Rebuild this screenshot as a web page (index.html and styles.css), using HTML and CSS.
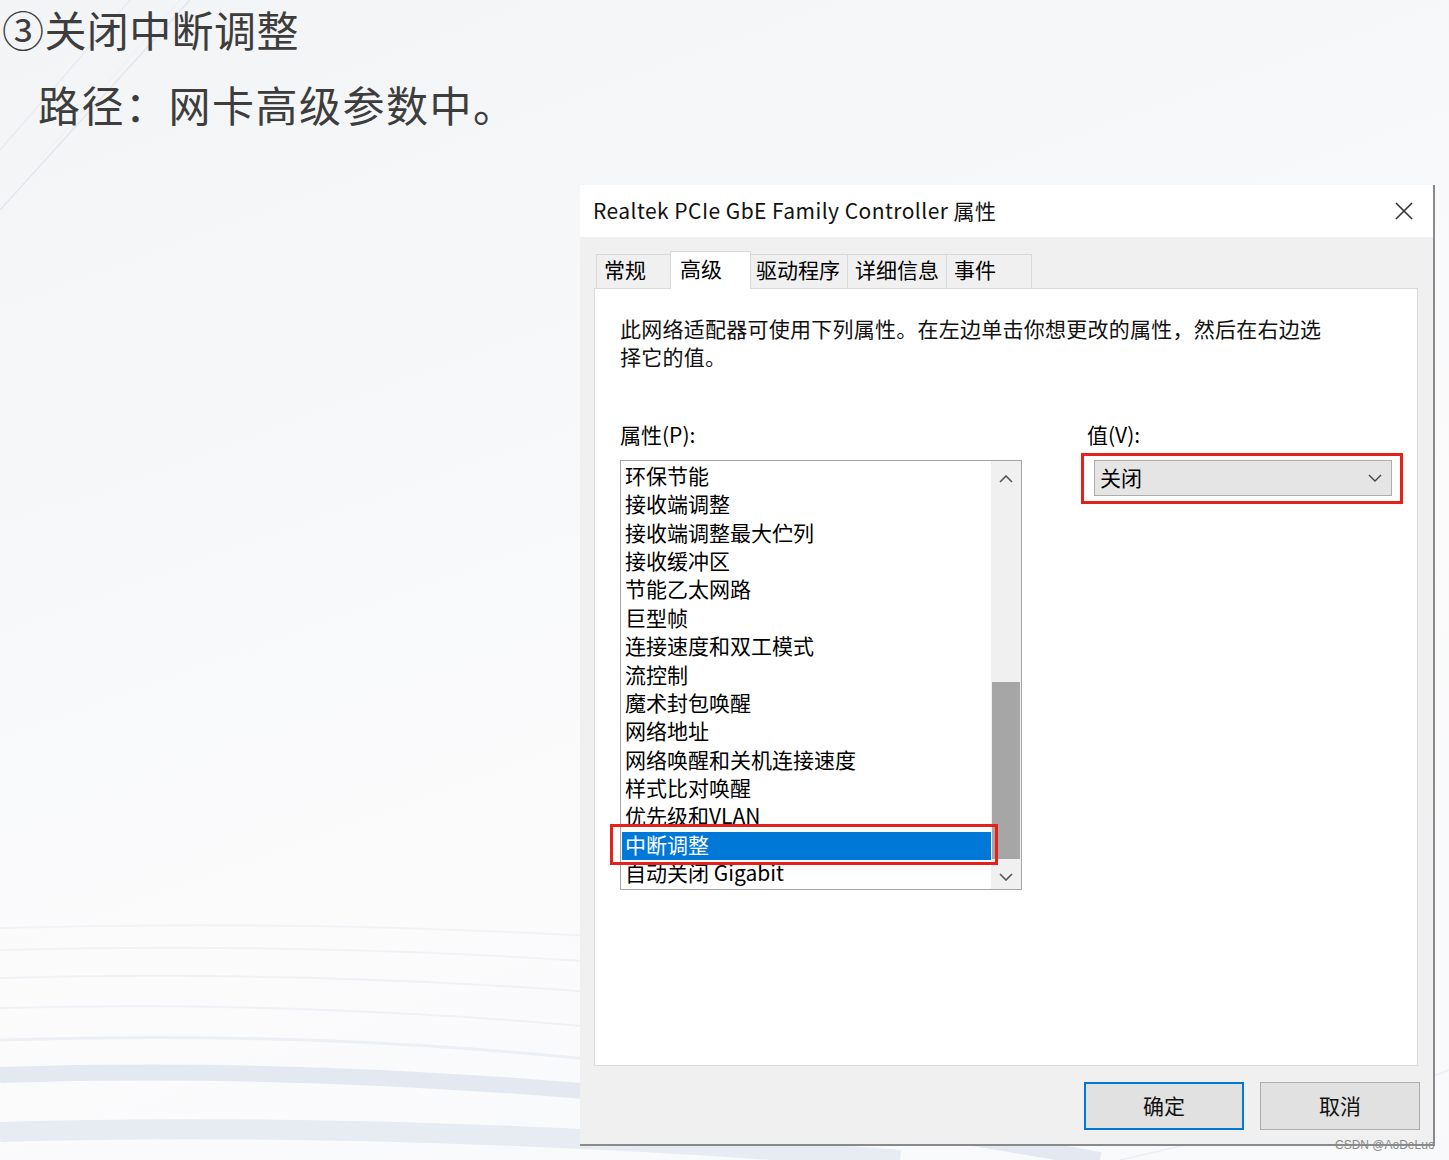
FILE: index.html
```html
<!DOCTYPE html>
<html lang="zh-CN">
<head>
<meta charset="UTF-8">
<title>关闭中断调整</title>
<link rel="stylesheet" href="styles.css">
</head>
<body>

<svg class="bg-waves" width="1449" height="1160" viewBox="0 0 1449 1160">
  <path d="M0 1075 C 300 1065, 700 1085, 1100 1160" stroke="#e4e9f1" stroke-width="16" fill="none"/>
  <path d="M0 1132 C 260 1124, 600 1134, 900 1160" stroke="#e7ebf2" stroke-width="20" fill="none"/>
  <path d="M0 1040 C 300 1030, 650 1050, 900 1110" stroke="#eceff4" stroke-width="3" fill="none"/>
  <path d="M0 1008 C 300 1000, 650 1020, 900 1070" stroke="#eef1f5" stroke-width="2" fill="none"/>
  <path d="M0 978 C 300 970, 650 985, 900 1030" stroke="#eff1f5" stroke-width="2" fill="none"/>
  <path d="M0 950 C 300 942, 650 955, 900 995" stroke="#f0f2f6" stroke-width="2" fill="none"/>
  <path d="M0 928 C 300 920, 650 930, 900 965" stroke="#f1f3f6" stroke-width="2" fill="none"/>
  <path d="M0 210 L 190 0" stroke="#e4e6ea" stroke-width="1.5" fill="none"/>
  <path d="M0 150 L 130 0" stroke="#e8eaee" stroke-width="1.2" fill="none"/>
  <path d="M40 160 L 180 0" stroke="#eceef1" stroke-width="1" fill="none"/>
  <path d="M1120 1160 C 1300 1120, 1400 1090, 1449 1070" stroke="#eceef2" stroke-width="1.5" fill="none"/>
</svg>

<div class="slide">
  <h1 class="slide-title">③关闭中断调整</h1>
  <p class="slide-sub">路径：网卡高级参数中。</p>

  <div class="dialog">
    <div class="titlebar">
      <span>Realtek PCIe GbE Family Controller 属性</span>
      <svg class="close" width="18" height="18" viewBox="0 0 18 18">
        <path d="M1 1 L17 17 M17 1 L1 17" stroke="#333" stroke-width="1.6"/>
      </svg>
    </div>

    <div class="dlg-body">
      <div class="tabs">
        <div class="tab">常规</div>
        <div class="tab active">高级</div>
        <div class="tab">驱动程序</div>
        <div class="tab">详细信息</div>
        <div class="tab tab-last">事件</div>
      </div>

      <div class="panel">
        <p class="desc">此网络适配器可使用下列属性。在左边单击你想更改的属性，然后在右边选<br>择它的值。</p>

        <div class="props">
          <div class="prop-col">
            <div class="label">属性(P):</div>
            <div class="listbox">
              <ul class="items">
                <li>环保节能</li>
                <li>接收端调整</li>
                <li>接收端调整最大伫列</li>
                <li>接收缓冲区</li>
                <li>节能乙太网路</li>
                <li>巨型帧</li>
                <li>连接速度和双工模式</li>
                <li>流控制</li>
                <li>魔术封包唤醒</li>
                <li>网络地址</li>
                <li>网络唤醒和关机连接速度</li>
                <li>样式比对唤醒</li>
                <li>优先级和VLAN</li>
                <li class="selected">中断调整</li>
                <li>自动关闭 Gigabit</li>
              </ul>
              <div class="scrollbar">
                <svg class="arrow" width="14" height="8" viewBox="0 0 14 8"><polyline points="1,7 7,1 13,7" stroke="#555" stroke-width="1.6" fill="none"/></svg>
                <div class="track"><div class="thumb"></div></div>
                <svg class="arrow" width="14" height="8" viewBox="0 0 14 8"><polyline points="1,1 7,7 13,1" stroke="#555" stroke-width="1.6" fill="none"/></svg>
              </div>
              <div class="mark mark-item"></div>
            </div>
          </div>

          <div class="value-col">
            <div class="label">值(V):</div>
            <div class="combo-wrap">
              <div class="combo">
                <span>关闭</span>
                <svg width="14" height="8" viewBox="0 0 14 8"><polyline points="1,1 7,7 13,1" stroke="#444" stroke-width="1.4" fill="none"/></svg>
              </div>
              <div class="mark mark-combo"></div>
            </div>
          </div>
        </div>
      </div>

      <div class="buttons">
        <button class="btn btn-default">确定</button>
        <button class="btn">取消</button>
      </div>
    </div>
  </div>
</div>

<div class="watermark">CSDN @AoDeLuo</div>

</body>
</html>
```

FILE: styles.css
```css
* { box-sizing: border-box; margin: 0; padding: 0; }
body { background: linear-gradient(160deg, #f3f4f6 0%, #f7f8fa 35%, #fbfbfc 60%, #f8f9fb 100%); font-family: "Noto Sans CJK SC", "Noto Sans", sans-serif; color: #000; width: 1449px; height: 1160px; overflow: hidden; position: relative; }

.bg-waves { position: absolute; left: 0; top: 0; z-index: 0; }

.slide { position: relative; z-index: 1; }
.slide-title { font-size: 42px; font-weight: normal; line-height: 52px; color: #3d3d3d; letter-spacing: 0.4px; padding: 3px 0 0 2px; }
.slide-sub { font-size: 42px; line-height: 56px; color: #3d3d3d; padding-left: 38px; margin-top: 21px; letter-spacing: 1.5px; }

.dialog { margin: 53px 0 0 580px; width: 855px; border-right: 2px solid #8a8a8a; border-bottom: 2px solid #8a8a8a; }

.titlebar { height: 52px; background: #fff; display: flex; align-items: center; justify-content: space-between; padding: 0 20px 3px 13px; font-size: 21px; color: #111; letter-spacing: 0.45px; }
.close { display: block; margin-top: 3px; }

.dlg-body { background: #f0f0f0; padding: 17px 15px 14px 14px; }

.tabs { display: flex; align-items: flex-end; height: 34px; padding-left: 3px; position: relative; z-index: 2; }
.tab { height: 34px; min-width: 76px; padding: 0 7px; font-size: 21px; line-height: 29px; border: 1px solid #d9d9d9; border-bottom: none; margin-left: -1px; background: #f0f0f0; color: #000; }
.tab.active { height: 38px; min-width: 81px; margin: 0 -2px -1px -2px; background: #fff; padding: 0 9px; line-height: 33px; position: relative; z-index: 1; }
.tab-last { min-width: 86px; }

.panel { height: 778px; background: #fff; border: 1px solid #dadada; padding: 25px 25px 0 25px; position: relative; }
.desc { font-size: 21px; line-height: 28px; color: #111; letter-spacing: 0.25px; }

.props { display: grid; grid-template-columns: 402px 1fr; column-gap: 65px; margin-top: 50px; }
.label { font-size: 21px; line-height: 28px; margin-bottom: 12px; }

.listbox { height: 430px; border: 1px solid #a5a5a5; display: flex; position: relative; }
.items { list-style: none; flex: 1; overflow: hidden; }
.items li { height: 28.36px; line-height: 28.36px; font-size: 21px; padding-left: 4px; white-space: nowrap; }
.items li.selected { background: #0078d7; color: #fff; margin-left: 1px; padding-left: 3px; margin-top: 2px; margin-bottom: -2px; line-height: 25px; }

.scrollbar { width: 30px; background: #f0f0f0; display: flex; flex-direction: column; align-items: center; }
.scrollbar .arrow { margin: 14px 0 8px; }
.scrollbar .arrow:last-child { margin: 8px 0 8px; }
.track { flex: 1; width: 100%; padding: 0 1px; display: flex; flex-direction: column; justify-content: flex-end; }
.thumb { height: 177px; background: #a6a6a6; margin-bottom: 6px; }

.mark { position: absolute; border: 3px solid #e5211b; pointer-events: none; }
.mark-item { left: -11px; top: 363px; width: 388px; height: 41px; }

.value-col { position: relative; }
.combo-wrap { position: relative; }
.combo { margin-left: 7px; width: 298px; height: 36px; margin-top: 1px; background: #e5e5e5; border: 1px solid #adadad; display: flex; align-items: center; justify-content: space-between; padding: 0 9px 2px 5px; font-size: 21px; }
.combo svg { display: block; margin-top: 2px; }
.mark-combo { left: -6px; top: -7px; width: 322px; height: 51px; }

.buttons { display: flex; justify-content: flex-end; gap: 16px; margin-top: 16px; margin-right: -2px; }
.btn { width: 160px; height: 48px; background: #e1e1e1; border: 1px solid #adadad; font-family: inherit; font-size: 21px; color: #111; padding-bottom: 3px; }
.btn-default { border: 2px solid #0078d7; }

.watermark { position: absolute; left: 1335px; top: 1137px; font-size: 12px; line-height: 16px; color: #8a8a8a; z-index: 2; font-family: "Liberation Sans", sans-serif; }
```
